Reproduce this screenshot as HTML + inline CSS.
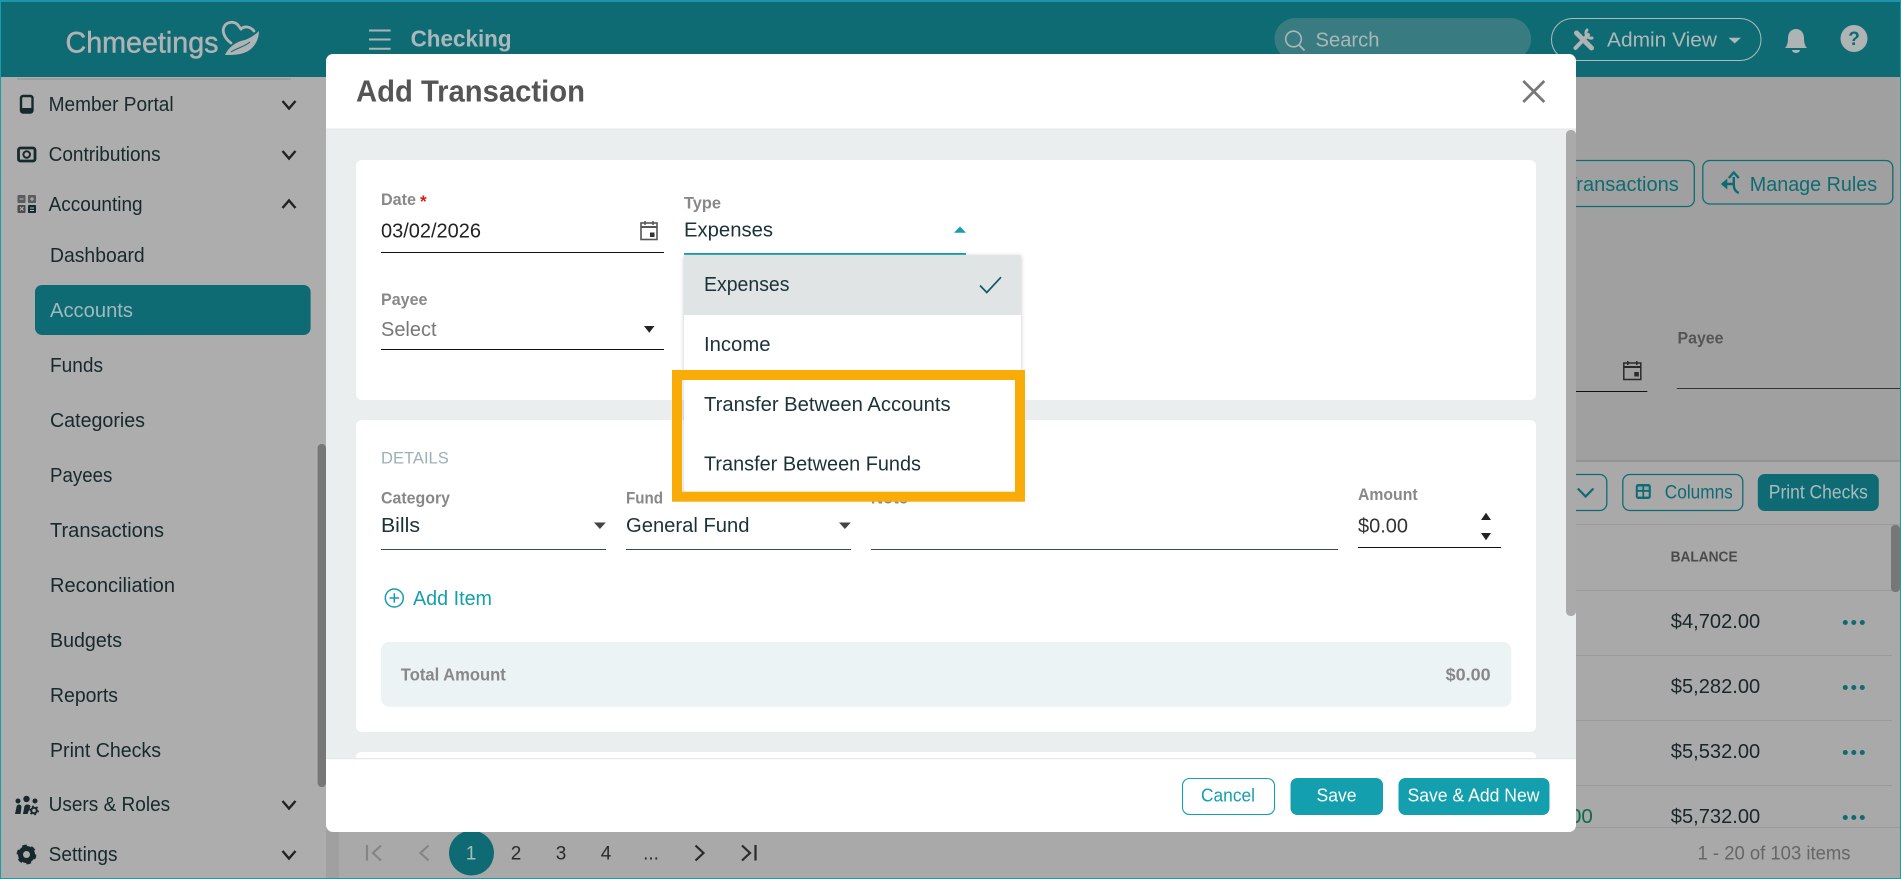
<!DOCTYPE html>
<html lang="en"><head><meta charset="utf-8"><title>Add Transaction</title>
<style>
html,body{margin:0;padding:0;background:#adadad;width:1901px;height:879px;overflow:hidden}
svg{display:block}
text{font-family:"Liberation Sans",sans-serif;white-space:pre}
.nav{font-size:20px;fill:#17292c}
.lb{font-size:16.5px;font-weight:700;fill:#888}
.v{font-size:20.5px;fill:#1b3238}
.it{font-size:20px;fill:#1b3238}
.b{font-weight:700}
</style></head><body>
<svg width="1901" height="879" viewBox="0 0 1901 879" xmlns="http://www.w3.org/2000/svg">
<!-- backgrounds -->
<rect width="1901" height="879" fill="#9fa09f"/>
<rect x="0" y="77" width="326" height="802" fill="#adadad"/>
<rect x="0" y="0" width="1901" height="77" fill="#0f6b73"/>

<!-- header -->
<text x="65.500" y="52.700" font-size="30" fill="#afb3b3" stroke="#afb3b3" stroke-width=".5" textLength="153" lengthAdjust="spacingAndGlyphs">Chmeetings</text>
<g transform="translate(0,1)">
<path d="M231 42C224 37 222 30 224 26C226 21 233 20 237 23C239 25 240 27 241 28C244 25 250 25 254 30" fill="none" stroke="#afb3b3" stroke-width="2.800" stroke-linecap="round"/>
<path d="M225 54C229 45 238 40 245 39C250 37 255 34 259 30C259 40 253 48 246 51C240 54 232 54 225 54Z" fill="#afb3b3"/>
<path d="M231 51C237 47 244 46 250 41" fill="none" stroke="#0f6b73" stroke-width="1"/>
</g>
<g stroke="#a9b4b5" stroke-width="2"><path d="M369 30.500h21.600M369 39.500h21.600M369 48.700h21.600"/></g>
<text x="410.600" y="46.500" font-size="23" class="b" fill="#a9b9bb" textLength="101" lengthAdjust="spacingAndGlyphs">Checking</text>
<g transform="translate(.5,0)">
<rect x="1274" y="18" width="256.600" height="42" rx="21" fill="#387c81"/>
<circle cx="1293" cy="39" r="7.800" fill="none" stroke="#aab7b8" stroke-width="1.600"/><path d="M1298.500 45l5.500 5.500" stroke="#aab7b8" stroke-width="1.800"/>
<text x="1315" y="46.500" font-size="20" fill="#adb6b6" textLength="64" lengthAdjust="spacingAndGlyphs">Search</text>
<rect x="1551" y="18.500" width="209.500" height="42" rx="21" fill="none" stroke="#aebcbc" stroke-width="1"/>
<g stroke="#aeb3b3" stroke-linecap="round" fill="none">
<path d="M1576 33L1591 48" stroke-width="5"/><path d="M1587.500 35L1575 48" stroke-width="4"/>
<path d="M1586.500 30a5 5 0 0 0 5 8" stroke-width="3"/>
</g>
<text x="1606.500" y="46.500" font-size="20" fill="#adb9b9" textLength="110" lengthAdjust="spacingAndGlyphs">Admin View</text>
<path d="M1728 37.700h12.400L1734.200 43.500z" fill="#adb9b9"/>
</g>
<g transform="translate(1,0)">
<path d="M1795 29c-5 0-8 4-8 9 0 5-1 8-3 10h22c-2-2-3-5-3-10 0-5-3-9-8-9z" fill="#aeb3b3"/><path d="M1791 50h8a4 3 0 0 1-8 0z" fill="#aeb3b3"/>
<circle cx="1853" cy="38.500" r="13.500" fill="#aeb3b3"/>
<text x="1853" y="45" font-size="19" class="b" fill="#0f6b73" text-anchor="middle">?</text>
</g>

<!-- sidebar -->
<rect x="17" y="78.500" width="274" height="1" fill="#8f8f8f"/>
<rect x="21" y="96" width="11.500" height="16.500" rx="2" fill="none" stroke="#17292c" stroke-width="2.400"/><rect x="21" y="108" width="11.500" height="4.500" fill="#17292c"/>
<rect x="18.500" y="148" width="16.500" height="13" rx="2" fill="none" stroke="#17292c" stroke-width="2.800"/><circle cx="26.700" cy="154.500" r="3.300" fill="none" stroke="#17292c" stroke-width="2"/>
<rect x="17.500" y="195" width="8" height="8" rx="1" fill="#5a5c5d"/><rect x="28" y="195" width="8" height="8" rx="1" fill="#5a5c5d"/>
<rect x="17.500" y="205" width="8" height="8" rx="1" fill="#4a4c4d"/><rect x="28" y="205" width="8" height="8" rx="1" fill="#17292c"/>
<path d="M19.500 199h4M30 199h4M32 197v4M20 207l3.500 3.500M23.500 207L20 210.500" stroke="#bbb" stroke-width="1"/><path d="M30 208h4M30 210.500h4" stroke="#bbb" stroke-width="1"/>
<g fill="#17292c"><circle cx="18" cy="801" r="2.500"/><circle cx="26.500" cy="799" r="3.200"/><circle cx="35" cy="801" r="2.500"/>
<path d="M15 814l1.500-7a2.500 2.500 0 0 1 5 0l-1 7zM23 814l1.500-8a3.500 3 0 0 1 6 0l-1 3-2 5z"/></g>
<circle cx="34" cy="810.500" r="2.800" fill="none" stroke="#17292c" stroke-width="2"/><circle cx="34" cy="810.500" r="4.200" fill="none" stroke="#17292c" stroke-width="1.500" stroke-dasharray="1.800 2.600"/>
<circle cx="26.500" cy="854.500" r="6" fill="none" stroke="#17292c" stroke-width="5"/><circle cx="26.500" cy="854.500" r="8.500" fill="none" stroke="#17292c" stroke-width="2.800" stroke-dasharray="4.500 4.400"/>

<text class="nav" x="48.600" y="110.800" textLength="125" lengthAdjust="spacingAndGlyphs">Member Portal</text>
<text class="nav" x="48.600" y="160.800" textLength="112" lengthAdjust="spacingAndGlyphs">Contributions</text>
<text class="nav" x="48.600" y="211" textLength="94" lengthAdjust="spacingAndGlyphs">Accounting</text>
<text class="nav" x="50" y="261.800" textLength="94.700" lengthAdjust="spacingAndGlyphs">Dashboard</text>
<rect x="35" y="285" width="275.600" height="50" rx="7" fill="#0f6b73"/>
<text class="nav" x="50" y="316.800" textLength="83" lengthAdjust="spacingAndGlyphs" style="fill:#a0b9bc">Accounts</text>
<text class="nav" x="50" y="371.800" textLength="53" lengthAdjust="spacingAndGlyphs">Funds</text>
<text class="nav" x="50" y="426.800" textLength="95" lengthAdjust="spacingAndGlyphs">Categories</text>
<text class="nav" x="50" y="481.800" textLength="62.400" lengthAdjust="spacingAndGlyphs">Payees</text>
<text class="nav" x="50" y="536.800" textLength="114" lengthAdjust="spacingAndGlyphs">Transactions</text>
<text class="nav" x="50" y="591.800" textLength="125" lengthAdjust="spacingAndGlyphs">Reconciliation</text>
<text class="nav" x="50" y="646.800" textLength="72" lengthAdjust="spacingAndGlyphs">Budgets</text>
<text class="nav" x="50" y="701.800" textLength="68" lengthAdjust="spacingAndGlyphs">Reports</text>
<text class="nav" x="50" y="756.800" textLength="111" lengthAdjust="spacingAndGlyphs">Print Checks</text>
<text class="nav" x="48.600" y="811" textLength="121.600" lengthAdjust="spacingAndGlyphs">Users &amp; Roles</text>
<text class="nav" x="48.600" y="861" textLength="69" lengthAdjust="spacingAndGlyphs">Settings</text>
<g fill="none" stroke="#222" stroke-width="2.400">
<path d="M282.500 101l6.500 7.500 6.500-7.500M282.500 151l6.500 7.500 6.500-7.500M282.500 208l6.500-7.500 6.500 7.500M282.500 801l6.500 7.500 6.500-7.500M282.500 851l6.500 7.500 6.500-7.500"/>
</g>
<rect x="317.600" y="444" width="8.400" height="343" rx="4" fill="#777"/>

<!-- main behind modal -->
<g transform="translate(.8,0)">
<rect x="1500" y="160.500" width="193.500" height="46" rx="7" fill="none" stroke="#0f6b73" stroke-width="1.300"/>
<text x="1564" y="190.800" font-size="20" fill="#0f6b73" textLength="114" lengthAdjust="spacingAndGlyphs">Transactions</text>
<rect x="1702" y="160.500" width="190" height="43.500" rx="7" fill="none" stroke="#0f6b73" stroke-width="1.300"/>
<path d="M1733 177v8c0 4 1.500 6.500 5 8M1728 178l5-5.500 5 5.500M1733 184h-8" fill="none" stroke="#0f6b73" stroke-width="2.400"/>
<path d="M1726.500 178.500l-6.500 5.500 6.500 5.500z" fill="#0f6b73"/>
<text x="1749" y="190.800" font-size="20" fill="#0f6b73" textLength="127.300" lengthAdjust="spacingAndGlyphs">Manage Rules</text>
<text x="1676.700" y="343.300" font-size="16.500" class="b" fill="#555" textLength="46" lengthAdjust="spacingAndGlyphs">Payee</text>
<rect x="1676" y="388" width="225" height="1" fill="#333"/>
<rect x="1500" y="391" width="146.500" height="1" fill="#111"/>
<g fill="none" stroke="#2a2a2a" stroke-width="1.500"><rect x="1623" y="363" width="17" height="16.500"/></g>
<path d="M1623 367h17" stroke="#2a2a2a" stroke-width="2"/><path d="M1627 361v4M1636 361v4" stroke="#2a2a2a" stroke-width="1.500"/><rect x="1633.500" y="372" width="4.500" height="4.500" fill="#2a2a2a"/>
</g>

<rect x="339" y="461.700" width="1562" height="418" fill="#a9a9a9"/>
<rect x="339" y="460" width="1562" height="2" fill="#929392"/>
<g transform="translate(.8,0)">
<rect x="1500" y="474.500" width="106" height="36" rx="7" fill="none" stroke="#0f6b73" stroke-width="1.300"/>
<path d="M1577 488.500l7.800 8 7.800-8" fill="none" stroke="#0f6b73" stroke-width="2.200"/>
<rect x="1622" y="474.500" width="120" height="36" rx="7" fill="none" stroke="#0f6b73" stroke-width="1.300"/>
<rect x="1635" y="484" width="15" height="15" rx="2.500" fill="#0f6b73"/><rect x="1637" y="491.800" width="4.600" height="4.800" fill="#a9a9a9"/><rect x="1643.300" y="491.800" width="4.600" height="4.800" fill="#a9a9a9"/><rect x="1637" y="486.500" width="4.600" height="3.500" fill="#8fa3a5"/><rect x="1643.300" y="486.500" width="4.600" height="3.500" fill="#8fa3a5"/>
<text x="1664" y="498.500" font-size="19" fill="#0f6b73" textLength="68" lengthAdjust="spacingAndGlyphs">Columns</text>
<rect x="1757" y="474" width="121" height="37" rx="7" fill="#0f6b73"/>
<text x="1768" y="498.500" font-size="19" fill="#a6bcbe" textLength="99" lengthAdjust="spacingAndGlyphs">Print Checks</text>
<g fill="#999"><rect x="1500" y="524" width="401" height="1"/><rect x="1500" y="590" width="391" height="1"/><rect x="1500" y="655" width="391" height="1"/><rect x="1500" y="720" width="391" height="1"/><rect x="1500" y="785" width="391" height="1"/><rect x="339" y="827" width="1562" height="1"/></g>
<text x="1669.800" y="561.500" font-size="14.500" class="b" fill="#4a4a4a" textLength="67" lengthAdjust="spacingAndGlyphs">BALANCE</text>
<g fill="#1b2528" font-size="20.500">
<text x="1670" y="628.200" textLength="89.400" lengthAdjust="spacingAndGlyphs">$4,702.00</text>
<text x="1670" y="693.200" textLength="89.400" lengthAdjust="spacingAndGlyphs">$5,282.00</text>
<text x="1670" y="758.200" textLength="89.400" lengthAdjust="spacingAndGlyphs">$5,532.00</text>
<text x="1670" y="823.200" textLength="89.400" lengthAdjust="spacingAndGlyphs">$5,732.00</text>
</g>
<text x="1592" y="823.200" font-size="20.500" fill="#0b6b48" text-anchor="end">$200.00</text>
<g fill="#0f6b73"><circle cx="1844.500" cy="622.500" r="2.500"/><circle cx="1853" cy="622.500" r="2.500"/><circle cx="1861.500" cy="622.500" r="2.500"/><circle cx="1844.500" cy="687.500" r="2.500"/><circle cx="1853" cy="687.500" r="2.500"/><circle cx="1861.500" cy="687.500" r="2.500"/><circle cx="1844.500" cy="752.500" r="2.500"/><circle cx="1853" cy="752.500" r="2.500"/><circle cx="1861.500" cy="752.500" r="2.500"/><circle cx="1844.500" cy="817.500" r="2.500"/><circle cx="1853" cy="817.500" r="2.500"/><circle cx="1861.500" cy="817.500" r="2.500"/></g>
<rect x="1890.200" y="525" width="9" height="67" rx="4" fill="#777"/>
</g>

<!-- pagination -->
<circle cx="471.500" cy="853" r="22.500" fill="#0f6b73"/>
<text x="471" y="859.500" font-size="19" fill="#a6bcbe" text-anchor="middle">1</text>
<g fill="none" stroke="#858585" stroke-width="2.200"><path d="M367 845v15.500M381 845.500l-8 7.500 8 7.500M428.500 845.500l-8 7.500 8 7.500"/></g>
<g font-size="19" fill="#2a2a2a" text-anchor="middle"><text x="516" y="859.500">2</text><text x="561" y="859.500">3</text><text x="606" y="859.500">4</text><text x="651" y="859.500">...</text></g>
<g fill="none" stroke="#2a2a2a" stroke-width="2.200"><path d="M695.500 845.500l8 7.500-8 7.500M742 845.500l8 7.500-8 7.500M755.500 845v15.500"/></g>
<text x="1697.500" y="859.500" font-size="19" fill="#666" textLength="153" lengthAdjust="spacingAndGlyphs">1 - 20 of 103 items</text>

<!-- modal -->
<rect x="326" y="54" width="1250" height="778" rx="7" fill="#fff"/>
<rect x="326" y="129" width="1250" height="629" fill="#ebeeef"/>
<rect x="326" y="128.500" width="1250" height="1" fill="#e6e8e8"/>
<rect x="326" y="758" width="1250" height="1.200" fill="#e8e8e8"/>
<text x="356" y="101.700" font-size="30.500" class="b" fill="#555" textLength="229" lengthAdjust="spacingAndGlyphs">Add Transaction</text>
<path d="M1523.300 81l21 21M1544.300 81l-21 21" stroke="#777" stroke-width="2.700"/>
<rect x="1566" y="130" width="10" height="486" rx="4.500" fill="#aaa"/>

<!-- cards -->
<rect x="356" y="160" width="1180" height="240" rx="6" fill="#fff"/>
<rect x="356" y="420" width="1180" height="312" rx="6" fill="#fff"/>
<path d="M356 758v-1a5 5 0 0 1 5-5h1170a5 5 0 0 1 5 5v1z" fill="#fff"/>

<text class="lb" x="381" y="205" textLength="35" lengthAdjust="spacingAndGlyphs">Date</text>
<text x="420" y="207" font-size="17" class="b" fill="#d61a1a">*</text>
<text class="v" x="381" y="237.500" textLength="100" lengthAdjust="spacingAndGlyphs" style="fill:#222">03/02/2026</text>
<rect x="381" y="252" width="283" height="1" fill="#111"/>
<g fill="none" stroke="#555" stroke-width="1.600"><rect x="641" y="223" width="16" height="16.500"/></g>
<path d="M641 227h16" stroke="#555" stroke-width="2"/><path d="M645 221v4M653 221v4" stroke="#555" stroke-width="1.500"/><rect x="650" y="232.500" width="4.500" height="4.500" fill="#333"/>
<text class="lb" x="684" y="208.300" textLength="37" lengthAdjust="spacingAndGlyphs">Type</text>
<text class="v" x="684" y="236.700" textLength="89" lengthAdjust="spacingAndGlyphs">Expenses</text>
<path d="M954 232.700h12L960 226.500z" fill="#139fad"/>
<rect x="684" y="253" width="282" height="1.800" fill="#139fad"/>

<text class="lb" x="381" y="305" textLength="46.500" lengthAdjust="spacingAndGlyphs">Payee</text>
<text class="v" x="381" y="336" textLength="55.500" lengthAdjust="spacingAndGlyphs" style="fill:#777">Select</text>
<rect x="381" y="349" width="283" height="1" fill="#111"/>
<path d="M644 326h10.500l-5.200 6.800z" fill="#222"/>

<text x="381" y="463.500" font-size="16.500" fill="#9ab1b5" textLength="67.800" lengthAdjust="spacingAndGlyphs">DETAILS</text>
<text class="lb" x="381" y="503.300" textLength="69" lengthAdjust="spacingAndGlyphs">Category</text>
<text class="lb" x="626" y="503.300" textLength="37" lengthAdjust="spacingAndGlyphs">Fund</text>
<text class="lb" x="871" y="503.300" textLength="37" lengthAdjust="spacingAndGlyphs">Note</text>
<text class="v" x="381" y="532" textLength="39" lengthAdjust="spacingAndGlyphs">Bills</text>
<text class="v" x="626" y="532" textLength="123.500" lengthAdjust="spacingAndGlyphs">General Fund</text>
<path d="M594 522.500h11.800l-5.900 6.500zM839 522.500h11.800l-5.900 6.500z" fill="#444"/>
<rect x="381" y="549" width="225" height="1" fill="#3a4a4e"/>
<rect x="626" y="549" width="225" height="1" fill="#3a4a4e"/>
<rect x="871" y="549" width="467" height="1" fill="#3a4a4e"/>
<text class="lb" x="1358" y="500.200" textLength="59.600" lengthAdjust="spacingAndGlyphs">Amount</text>
<text class="v" x="1358" y="532.700" textLength="50" lengthAdjust="spacingAndGlyphs" style="fill:#333">$0.00</text>
<path d="M1481 520h10l-5-7.300zM1481 533h10l-5 7.300z" fill="#222"/>
<rect x="1358" y="547" width="143" height="1" fill="#111"/>
<circle cx="394.300" cy="598" r="9" fill="none" stroke="#139fad" stroke-width="1.500"/><path d="M389.500 598h9.600M394.300 593.200v9.600" stroke="#139fad" stroke-width="1.500"/>
<text x="413" y="605" font-size="20" fill="#139fad" textLength="79" lengthAdjust="spacingAndGlyphs">Add Item</text>
<rect x="381" y="642" width="1130.300" height="64.700" rx="8" fill="#ecf3f5"/>
<text class="lb" x="400.800" y="680.500" textLength="105" lengthAdjust="spacingAndGlyphs" style="font-size:17.500px">Total Amount</text>
<text class="lb" x="1445.700" y="680.500" textLength="45" lengthAdjust="spacingAndGlyphs" style="font-size:17.500px">$0.00</text>

<!-- dropdown -->
<rect x="684" y="255" width="337" height="243" fill="#fff" style="filter:drop-shadow(0 1px 2px rgba(0,0,0,.22))"/>
<rect x="684" y="255" width="337" height="60" fill="#e0e4e5"/>
<text class="it" x="704" y="291" textLength="85.500" lengthAdjust="spacingAndGlyphs">Expenses</text>
<path d="M980 285.500l6.800 7L1001 277.200" fill="none" stroke="#0f5b63" stroke-width="1.700"/>
<text class="it" x="704" y="351" textLength="66.500" lengthAdjust="spacingAndGlyphs">Income</text>
<text class="it" x="704" y="411" textLength="246.600" lengthAdjust="spacingAndGlyphs">Transfer Between Accounts</text>
<text class="it" x="704" y="470.700" textLength="217" lengthAdjust="spacingAndGlyphs">Transfer Between Funds</text>
<rect x="677" y="375" width="343" height="121.700" fill="none" stroke="#f9ab07" stroke-width="10"/>

<!-- footer buttons -->
<rect x="1182.500" y="778.500" width="92" height="36" rx="7" fill="#fff" stroke="#139fad" stroke-width="1.100"/>
<text x="1201" y="801.500" font-size="18" fill="#139fad" textLength="54" lengthAdjust="spacingAndGlyphs">Cancel</text>
<rect x="1290.500" y="778" width="92.500" height="37" rx="7" fill="#139fad"/>
<text x="1316.500" y="801.500" font-size="18" fill="#fff" textLength="40" lengthAdjust="spacingAndGlyphs">Save</text>
<rect x="1398.500" y="778" width="151" height="37" rx="7" fill="#139fad"/>
<text x="1407.500" y="801.500" font-size="18" fill="#fff" textLength="132" lengthAdjust="spacingAndGlyphs">Save &amp; Add New</text>

<!-- outer frame -->
<rect x="0" y="0" width="1901" height="2" fill="#1d96ad"/>
<rect x="0" y="0" width="1" height="879" fill="#1f9aa8"/>
<rect x="1900" y="0" width="1" height="879" fill="#1f9aa8"/>
<rect x="0" y="878" width="1901" height="1" fill="#139fa8"/>
</svg>
</body></html>
